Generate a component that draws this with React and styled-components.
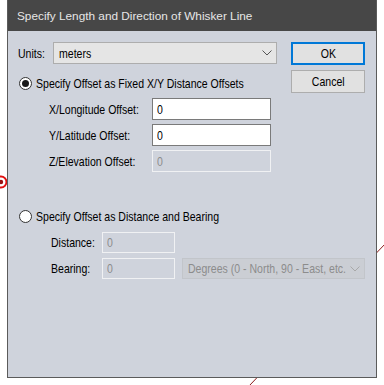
import React from "react";
import styled, { createGlobalStyle } from "styled-components";

const GlobalStyle = createGlobalStyle`
  html, body {
    margin: 0;
    padding: 0;
    background: #ffffff;
    overflow: hidden;
  }
`;

const Canvas = styled.div`
  position: relative;
  width: 384px;
  height: 385px;
  overflow: hidden;
  font-family: "Liberation Sans", Arial, sans-serif;
  font-size: 13px;
  color: #000;
`;

// map features lying behind the dialog
const Backdrop = styled.svg`
  position: absolute;
  left: 0;
  top: 0;
`;

// the dialog font is a tall narrow face; squeeze Liberation Sans to match
const Narrow = styled.span`
  display: inline-block;
  white-space: nowrap;
  transform: scaleX(0.81);
  transform-origin: ${(p) => (p.$center ? "center" : "left")} center;
`;

const Dialog = styled.div`
  position: relative;
  margin-left: 7px;
  width: 368px;
  height: 377px;
  border: 1px solid #5b5b5b;
  border-top: none;
  background: #cfd3dc;
  display: flex;
  flex-direction: column;
`;

const TitleBar = styled.div`
  height: 31px;
  background: #474747;
  color: #e6e6e6;
  font-size: 11.8px;
  display: flex;
  align-items: center;
  padding-left: 9px;
`;

const Body = styled.div`
  padding: 11px 11px 0 10px;
  display: flex;
  flex-direction: column;
`;

const Top = styled.div`
  display: flex;
  justify-content: space-between;
`;

const LeftCol = styled.div`
  width: 259px;
  display: flex;
  flex-direction: column;
`;

const ButtonCol = styled.div`
  display: flex;
  flex-direction: column;
  gap: 5px;
`;

const Button = styled.div`
  box-sizing: border-box;
  width: 74px;
  height: 23px;
  background: #e1e1e1;
  border: ${(p) => (p.$default ? "2px solid #0078d7" : "1px solid #adadad")};
  display: flex;
  align-items: center;
  justify-content: center;
`;

const Row = styled.div`
  display: flex;
  align-items: center;
  gap: ${(p) => p.$gap || 0}px;
  margin-top: ${(p) => p.$top || 0}px;
  padding-left: ${(p) => p.$indent || 0}px;
`;

const Label = styled.div`
  width: ${(p) => p.$w}px;
  flex: none;
`;

const Select = styled.div`
  box-sizing: border-box;
  width: ${(p) => p.$w}px;
  height: ${(p) => p.$h || 22}px;
  background: ${(p) => (p.$disabled ? "#cbced4" : "#e5e5e5")};
  border: 1px solid ${(p) => (p.$disabled ? "#c2c5ca" : "#adadad")};
  color: ${(p) => (p.$disabled ? "#8c8c8c" : "#000")};
  display: flex;
  align-items: center;
  padding: 0 4px 0 5px;
  gap: 4px;
`;

const SelectText = styled.div`
  flex: 1;
  min-width: 0;
  overflow: hidden;
`;

const Field = styled.div`
  box-sizing: border-box;
  width: ${(p) => p.$w}px;
  height: ${(p) => p.$h || 22}px;
  padding: 0 4px;
  display: flex;
  align-items: center;
  background: ${(p) => (p.$disabled ? "#cfd3dc" : "#ffffff")};
  border: 1px solid ${(p) => (p.$disabled ? "#f0f1f3" : "#7a7a7a")};
  color: ${(p) => (p.$disabled ? "#8c8c8c" : "#000")};
`;

const RadioRow = styled.div`
  display: flex;
  align-items: center;
  gap: 4px;
  height: 18px;
  margin-top: ${(p) => p.$top}px;
  padding-left: 1px;
`;

const RadioDot = styled.span`
  box-sizing: border-box;
  flex: none;
  width: 13px;
  height: 13px;
  border-radius: 50%;
  border: 1px solid #333;
  background: #fff;
  display: flex;
  align-items: center;
  justify-content: center;
  &::after {
    content: "";
    width: 7px;
    height: 7px;
    border-radius: 50%;
    background: ${(p) => (p.$checked ? "#1a1a1a" : "transparent")};
  }
`;

const Chevron = ({ color }) => (
  <svg width="10" height="6" viewBox="0 0 10 6" style={{ flex: "none" }}>
    <path d="M0.5 0.5 L5 5 L9.5 0.5" fill="none" stroke={color} strokeWidth="1" />
  </svg>
);

export default function App() {
  return (
    <Canvas>
      <GlobalStyle />
      <Backdrop width="384" height="385">
        <line x1="249" y1="386" x2="386" y2="243" stroke="#8b1a1a" strokeWidth="1" />
        <circle cx="1" cy="182" r="5.5" fill="#fff" stroke="#e01010" strokeWidth="2" />
        <circle cx="1" cy="182" r="2.2" fill="#9b1010" />
      </Backdrop>
      <Dialog>
        <TitleBar>Specify Length and Direction of Whisker Line</TitleBar>
        <Body>
          <Top>
            <LeftCol>
              <Row>
                <Label $w={35}><Narrow>Units:</Narrow></Label>
                <Select $w={224}>
                  <SelectText><Narrow>meters</Narrow></SelectText>
                  <Chevron color="#555" />
                </Select>
              </Row>
              <RadioRow $top={10}>
                <RadioDot $checked />
                <Narrow>Specify Offset as Fixed X/Y Distance Offsets</Narrow>
              </RadioRow>
              <Row $top={6} $indent={31}>
                <Label $w={103}><Narrow>X/Longitude Offset:</Narrow></Label>
                <Field $w={119}><Narrow>0</Narrow></Field>
              </Row>
              <Row $top={4} $indent={31}>
                <Label $w={103}><Narrow>Y/Latitude Offset:</Narrow></Label>
                <Field $w={119}><Narrow>0</Narrow></Field>
              </Row>
              <Row $top={4} $indent={31}>
                <Label $w={103}><Narrow>Z/Elevation Offset:</Narrow></Label>
                <Field $w={119} $disabled><Narrow>0</Narrow></Field>
              </Row>
            </LeftCol>
            <ButtonCol>
              <Button $default><Narrow $center>OK</Narrow></Button>
              <Button><Narrow $center>Cancel</Narrow></Button>
            </ButtonCol>
          </Top>
          <RadioRow $top={35}>
            <RadioDot />
            <Narrow>Specify Offset as Distance and Bearing</Narrow>
          </RadioRow>
          <Row $top={7} $indent={33}>
            <Label $w={51}><Narrow>Distance:</Narrow></Label>
            <Field $w={73} $h={21} $disabled><Narrow>0</Narrow></Field>
          </Row>
          <Row $top={5} $indent={33} $gap={7}>
            <Label $w={44}><Narrow>Bearing:</Narrow></Label>
            <Field $w={73} $h={21} $disabled><Narrow>0</Narrow></Field>
            <Select $w={183} $h={21} $disabled>
              <SelectText><Narrow>Degrees (0 - North, 90 - East, etc.</Narrow></SelectText>
              <Chevron color="#a8a8a8" />
            </Select>
          </Row>
        </Body>
      </Dialog>
    </Canvas>
  );
}
